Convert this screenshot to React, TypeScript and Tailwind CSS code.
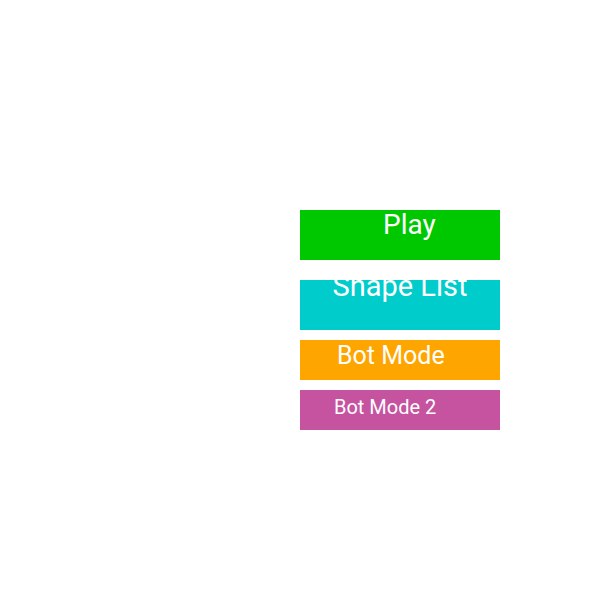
export default function App() {
  return (
    <div className="flex h-[600px] w-[600px] flex-col bg-white pl-[300px] pt-[210px] font-['Roboto',sans-serif] text-white">
      <div className="h-[50px] w-[200px] overflow-hidden bg-[#00c800] pl-[83px] pt-[1px]">
        <div className="text-[28px] leading-none">Play</div>
      </div>
      <div className="mt-[20px] h-[50px] w-[200px] overflow-hidden bg-[#00cccc] text-center">
        <div className="mt-[-8px] text-[29px] leading-none">Shape List</div>
      </div>
      <div className="mt-[10px] h-[40px] w-[200px] overflow-hidden bg-[#ffa500] pl-[37px] pt-[3px]">
        <div className="text-[25px] leading-none">Bot Mode</div>
      </div>
      <div className="mt-[10px] h-[40px] w-[200px] overflow-hidden bg-[#c653a0] pl-[34px] pt-[7px]">
        <div className="text-[20px] leading-none">Bot Mode 2</div>
      </div>
    </div>
  )
}
